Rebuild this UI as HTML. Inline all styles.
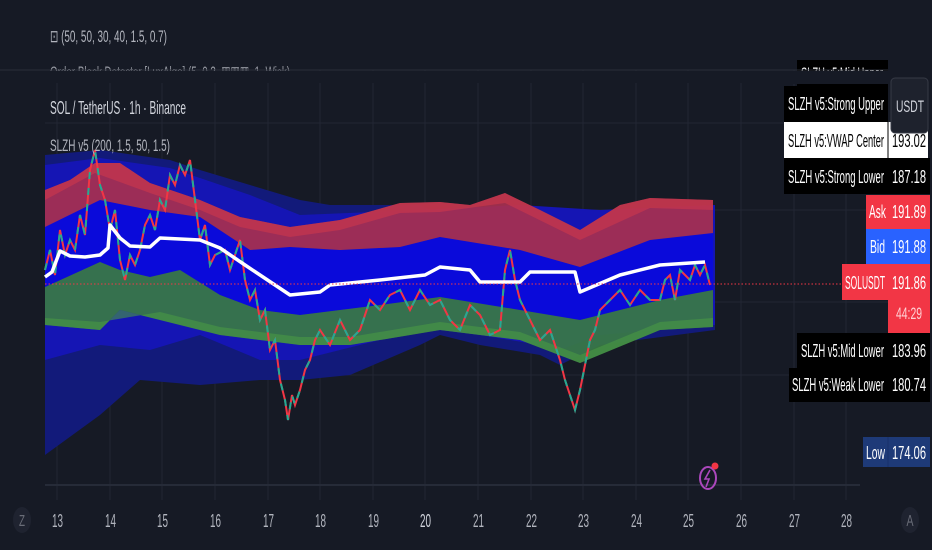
<!DOCTYPE html>
<html><head><meta charset="utf-8"><style>
html,body{margin:0;padding:0;background:#161a25;}
svg{display:block}
text{font-family:"Liberation Sans",sans-serif;}
</style></head><body>
<svg width="932" height="550" viewBox="0 0 932 550" xmlns="http://www.w3.org/2000/svg">
<rect width="932" height="550" fill="#161a25"/>
<g stroke="#222633" stroke-width="1">
<line x1="57" y1="70" x2="57" y2="500"/><line x1="110" y1="70" x2="110" y2="500"/><line x1="162" y1="70" x2="162" y2="500"/><line x1="215" y1="70" x2="215" y2="500"/><line x1="268" y1="70" x2="268" y2="500"/><line x1="320" y1="70" x2="320" y2="500"/><line x1="373" y1="70" x2="373" y2="500"/><line x1="425" y1="70" x2="425" y2="500"/><line x1="478" y1="70" x2="478" y2="500"/><line x1="531" y1="70" x2="531" y2="500"/><line x1="583" y1="70" x2="583" y2="500"/><line x1="636" y1="70" x2="636" y2="500"/><line x1="688" y1="70" x2="688" y2="500"/><line x1="741" y1="70" x2="741" y2="500"/><line x1="794" y1="70" x2="794" y2="500"/><line x1="846" y1="70" x2="846" y2="500"/>
<line x1="45" y1="123" x2="888" y2="123"/><line x1="45" y1="210" x2="888" y2="210"/><line x1="45" y1="302" x2="888" y2="302"/><line x1="45" y1="375" x2="888" y2="375"/><line x1="45" y1="485" x2="860" y2="485" stroke="#262b38" stroke-width="2"/>
</g>
<polygon fill="#121a7a" points="45,155 100,150 170,160 200,170 250,185 300,200 330,205 420,205 440,215 520,215 600,215 715,210 715,330 600,345 560,365 540,355 480,345 440,335 420,345 350,375 300,380 260,380 200,385 140,380 100,415 45,455"/>
<polygon fill="#1515b4" points="45,165 100,158 170,168 200,178 250,195 300,215 420,210 520,205 600,210 715,205 715,325 600,335 560,350 540,345 480,335 440,330 400,335 300,360 260,360 200,335 150,350 100,345 45,360"/>
<polygon fill="#0a0ada" points="45,225 100,200 150,210 200,217 250,250 290,247 340,250 400,247 440,237 520,250 580,267 650,240 713,233 713,290 660,300 580,320 520,310 440,297 380,305 300,315 260,310 220,295 180,270 150,277 120,270 100,262 45,287"/>
<polygon fill="#a8304f" opacity="0.92" points="45,190 70,180 95,163 120,163 150,183 200,200 240,217 290,227 340,220 400,203 440,202 470,205 505,193 540,210 580,230 620,205 650,198 713,200 713,233 650,240 580,267 520,250 440,237 400,247 340,250 290,247 250,250 200,217 150,210 100,200 45,227"/>
<polygon fill="#d83a4a" opacity="0.5" points="45,190 70,180 95,163 120,163 150,183 200,200 240,217 290,227 340,220 400,203 440,202 470,205 505,193 540,210 580,230 620,205 650,198 713,200 713,210 650,208 580,240 505,203 440,212 400,213 340,230 290,237 240,227 200,210 150,193 95,173 45,200"/>
<polygon fill="#3a7a45" opacity="0.92" points="45,287 100,262 120,270 150,277 180,270 220,295 260,310 300,315 380,305 440,297 520,310 580,320 660,300 713,290 713,327 660,330 580,363 520,340 440,330 350,345 300,345 220,335 160,320 120,310 100,330 45,325"/>
<polygon fill="#4a9a45" opacity="0.6" points="45,318 100,322 160,312 220,327 300,337 350,337 440,322 520,332 580,355 660,322 713,318 713,327 660,330 580,363 520,340 440,330 350,345 300,345 220,335 160,320 120,310 100,330 45,325"/>
<polyline fill="none" stroke="#f23645" stroke-width="2" points="45,270 50,250 55,275 60,230 65,255 70,240 75,250 80,215 85,235 90,170 95,150 100,185 105,200 110,230 115,210 120,260 125,280 130,255 135,265 140,250 145,225 150,215 155,230 160,200 165,210 170,175 175,185 180,165 185,175 190,160 195,200 200,240 205,225 210,265 215,255 225,250 230,270 240,240 245,280 250,300 255,290 260,320 265,310 270,350 275,340 280,380 285,400 288,420 292,395 295,405 300,390 305,370 310,360 315,340 320,330 330,345 340,320 350,340 360,330 370,300 380,310 390,295 400,290 410,310 420,290 430,305 440,300 450,320 460,330 470,305 480,315 490,335 500,330 505,270 510,250 515,280 520,300 530,320 540,340 550,330 560,360 565,380 575,410 580,390 590,340 595,330 600,310 610,300 620,290 630,305 640,290 650,300 660,300 665,280 670,275 675,300 680,270 690,280 695,265 700,275 705,265 710,285"/>
<polyline fill="none" stroke="#22ab94" stroke-width="2" stroke-dasharray="7 9" points="45,270 50,250 55,275 60,230 65,255 70,240 75,250 80,215 85,235 90,170 95,150 100,185 105,200 110,230 115,210 120,260 125,280 130,255 135,265 140,250 145,225 150,215 155,230 160,200 165,210 170,175 175,185 180,165 185,175 190,160 195,200 200,240 205,225 210,265 215,255 225,250 230,270 240,240 245,280 250,300 255,290 260,320 265,310 270,350 275,340 280,380 285,400 288,420 292,395 295,405 300,390 305,370 310,360 315,340 320,330 330,345 340,320 350,340 360,330 370,300 380,310 390,295 400,290 410,310 420,290 430,305 440,300 450,320 460,330 470,305 480,315 490,335 500,330 505,270 510,250 515,280 520,300 530,320 540,340 550,330 560,360 565,380 575,410 580,390 590,340 595,330 600,310 610,300 620,290 630,305 640,290 650,300 660,300 665,280 670,275 675,300 680,270 690,280 695,265 700,275 705,265 710,285"/>
<polyline fill="none" stroke="#ffffff" stroke-width="3.5" stroke-linejoin="round" points="45,277 52,272 60,251 70,256 85,257 100,255 108,248 110,225 120,238 130,246 150,247 160,238 200,240 220,248 245,265 290,295 320,292 330,285 380,280 425,275 440,267 470,270 480,282 520,282 530,272 575,272 580,292 620,275 660,265 705,262"/>
<line x1="45" y1="284" x2="842" y2="284" stroke="#f23645" stroke-width="1" stroke-dasharray="1.5 2"/>
<text x="50" y="42" fill="#b2b5be" font-size="17" textLength="117" lengthAdjust="spacingAndGlyphs">⊡ (50, 50, 30, 40, 1.5, 0.7)</text>
<text x="50" y="78" fill="#9598a1" font-size="17" textLength="240" lengthAdjust="spacingAndGlyphs">Order Block Detector [LuxAlgo] (5, 0.3, ▦▦▦, 1, Wick)</text>
<rect x="0" y="71" width="888" height="12" fill="#161a25"/>
<line x1="0" y1="70" x2="888" y2="70" stroke="#2a2e39"/>
<text x="50" y="114" fill="#d1d4dc" font-size="18" textLength="136" lengthAdjust="spacingAndGlyphs">SOL / TetherUS · 1h · Binance</text>
<text x="50" y="151" fill="#b2b5be" font-size="17" textLength="120" lengthAdjust="spacingAndGlyphs">SLZH v5 (200, 1.5, 50, 1.5)</text>
<rect x="797" y="60" width="91" height="26" fill="#000"/>
<text x="801" y="79" fill="#fff" font-size="17" textLength="82" lengthAdjust="spacingAndGlyphs">SLZH v5:Mid Upper</text>
<rect x="784" y="71" width="104" height="13" fill="#161a25"/>
<line x1="784" y1="70" x2="888" y2="70" stroke="#2a2e39"/>
<rect x="784" y="86" width="104" height="36" fill="#000"/>
<text x="788" y="110" fill="#fff" font-size="18" textLength="96" lengthAdjust="spacingAndGlyphs">SLZH v5:Strong Upper</text>
<rect x="784" y="122" width="144" height="36" fill="#fff"/>
<line x1="888" y1="122" x2="888" y2="158" stroke="#000"/>
<text x="788" y="147" fill="#000" font-size="18" textLength="96" lengthAdjust="spacingAndGlyphs">SLZH v5:VWAP Center</text>
<text x="892" y="147" fill="#000" font-size="18" textLength="34" lengthAdjust="spacingAndGlyphs">193.02</text>
<rect x="891" y="78" width="37" height="55" rx="4" fill="#1e222d" stroke="#363a45"/>
<text x="896" y="112" fill="#d1d4dc" font-size="17" textLength="28" lengthAdjust="spacingAndGlyphs">USDT</text>
<rect x="784" y="158" width="146" height="36" fill="#000"/>
<text x="788" y="183" fill="#fff" font-size="18" textLength="96" lengthAdjust="spacingAndGlyphs">SLZH v5:Strong Lower</text>
<text x="892" y="183" fill="#fff" font-size="18" textLength="34" lengthAdjust="spacingAndGlyphs">187.18</text>
<rect x="866" y="195" width="64" height="34" fill="#f23645"/>
<text x="869" y="218" fill="#fff" font-size="18" textLength="17" lengthAdjust="spacingAndGlyphs">Ask</text>
<text x="892" y="218" fill="#fff" font-size="18" textLength="34" lengthAdjust="spacingAndGlyphs">191.89</text>
<rect x="866" y="229" width="64" height="35" fill="#2962ff"/>
<text x="870" y="253" fill="#fff" font-size="18" textLength="15" lengthAdjust="spacingAndGlyphs">Bid</text>
<text x="892" y="253" fill="#fff" font-size="18" textLength="34" lengthAdjust="spacingAndGlyphs">191.88</text>
<rect x="842" y="264" width="46" height="36" fill="#f23645"/>
<rect x="888" y="264" width="42" height="69" fill="#f23645"/>
<text x="845" y="289" fill="#fff" font-size="18" textLength="40" lengthAdjust="spacingAndGlyphs">SOLUSDT</text>
<text x="892" y="289" fill="#fff" font-size="18" textLength="34" lengthAdjust="spacingAndGlyphs">191.86</text>
<text x="896" y="319" fill="#ffd0d4" font-size="17" textLength="26" lengthAdjust="spacingAndGlyphs">44:29</text>
<rect x="797" y="333" width="133" height="35" fill="#000"/>
<text x="801" y="357" fill="#fff" font-size="18" textLength="83" lengthAdjust="spacingAndGlyphs">SLZH v5:Mid Lower</text>
<text x="892" y="357" fill="#fff" font-size="18" textLength="34" lengthAdjust="spacingAndGlyphs">183.96</text>
<rect x="789" y="368" width="141" height="34" fill="#000"/>
<text x="792" y="391" fill="#fff" font-size="18" textLength="92" lengthAdjust="spacingAndGlyphs">SLZH v5:Weak Lower</text>
<text x="892" y="391" fill="#fff" font-size="18" textLength="34" lengthAdjust="spacingAndGlyphs">180.74</text>
<rect x="863" y="437" width="67" height="30" fill="#1e3a78"/>
<line x1="888" y1="437" x2="888" y2="467" stroke="#18306a"/>
<text x="866" y="459" fill="#fff" font-size="18" textLength="19" lengthAdjust="spacingAndGlyphs">Low</text>
<text x="892" y="459" fill="#fff" font-size="18" textLength="34" lengthAdjust="spacingAndGlyphs">174.06</text>
<ellipse cx="708" cy="478" rx="8" ry="11" fill="none" stroke="#ab47bc" stroke-width="2"/>
<path d="M710 470 L705 479 L709 479 L706 487" fill="none" stroke="#ab47bc" stroke-width="1.6"/>
<circle cx="715" cy="466" r="3.5" fill="#f23645"/>
<ellipse cx="22" cy="520" rx="9" ry="13" fill="#1f2330"/>
<text x="22" y="526" fill="#6a6d78" font-size="16" text-anchor="middle" textLength="6" lengthAdjust="spacingAndGlyphs">Z</text>
<ellipse cx="910" cy="520" rx="9" ry="13" fill="#1f2330"/>
<text x="910" y="526" fill="#6a6d78" font-size="16" text-anchor="middle" textLength="7" lengthAdjust="spacingAndGlyphs">A</text>
<g fill="#b2b5be" font-size="18">
<text x="52" y="527" textLength="11" lengthAdjust="spacingAndGlyphs">13</text><text x="105" y="527" textLength="11" lengthAdjust="spacingAndGlyphs">14</text><text x="157" y="527" textLength="11" lengthAdjust="spacingAndGlyphs">15</text><text x="210" y="527" textLength="11" lengthAdjust="spacingAndGlyphs">16</text><text x="263" y="527" textLength="11" lengthAdjust="spacingAndGlyphs">17</text><text x="315" y="527" textLength="11" lengthAdjust="spacingAndGlyphs">18</text><text x="368" y="527" textLength="11" lengthAdjust="spacingAndGlyphs">19</text><text x="420" y="527" textLength="11" lengthAdjust="spacingAndGlyphs" fill="#d1d4dc">20</text><text x="473" y="527" textLength="11" lengthAdjust="spacingAndGlyphs">21</text><text x="526" y="527" textLength="11" lengthAdjust="spacingAndGlyphs">22</text><text x="578" y="527" textLength="11" lengthAdjust="spacingAndGlyphs">23</text><text x="631" y="527" textLength="11" lengthAdjust="spacingAndGlyphs">24</text><text x="683" y="527" textLength="11" lengthAdjust="spacingAndGlyphs">25</text><text x="736" y="527" textLength="11" lengthAdjust="spacingAndGlyphs">26</text><text x="789" y="527" textLength="11" lengthAdjust="spacingAndGlyphs">27</text><text x="841" y="527" textLength="11" lengthAdjust="spacingAndGlyphs">28</text>
</g>
</svg>
</body></html>
